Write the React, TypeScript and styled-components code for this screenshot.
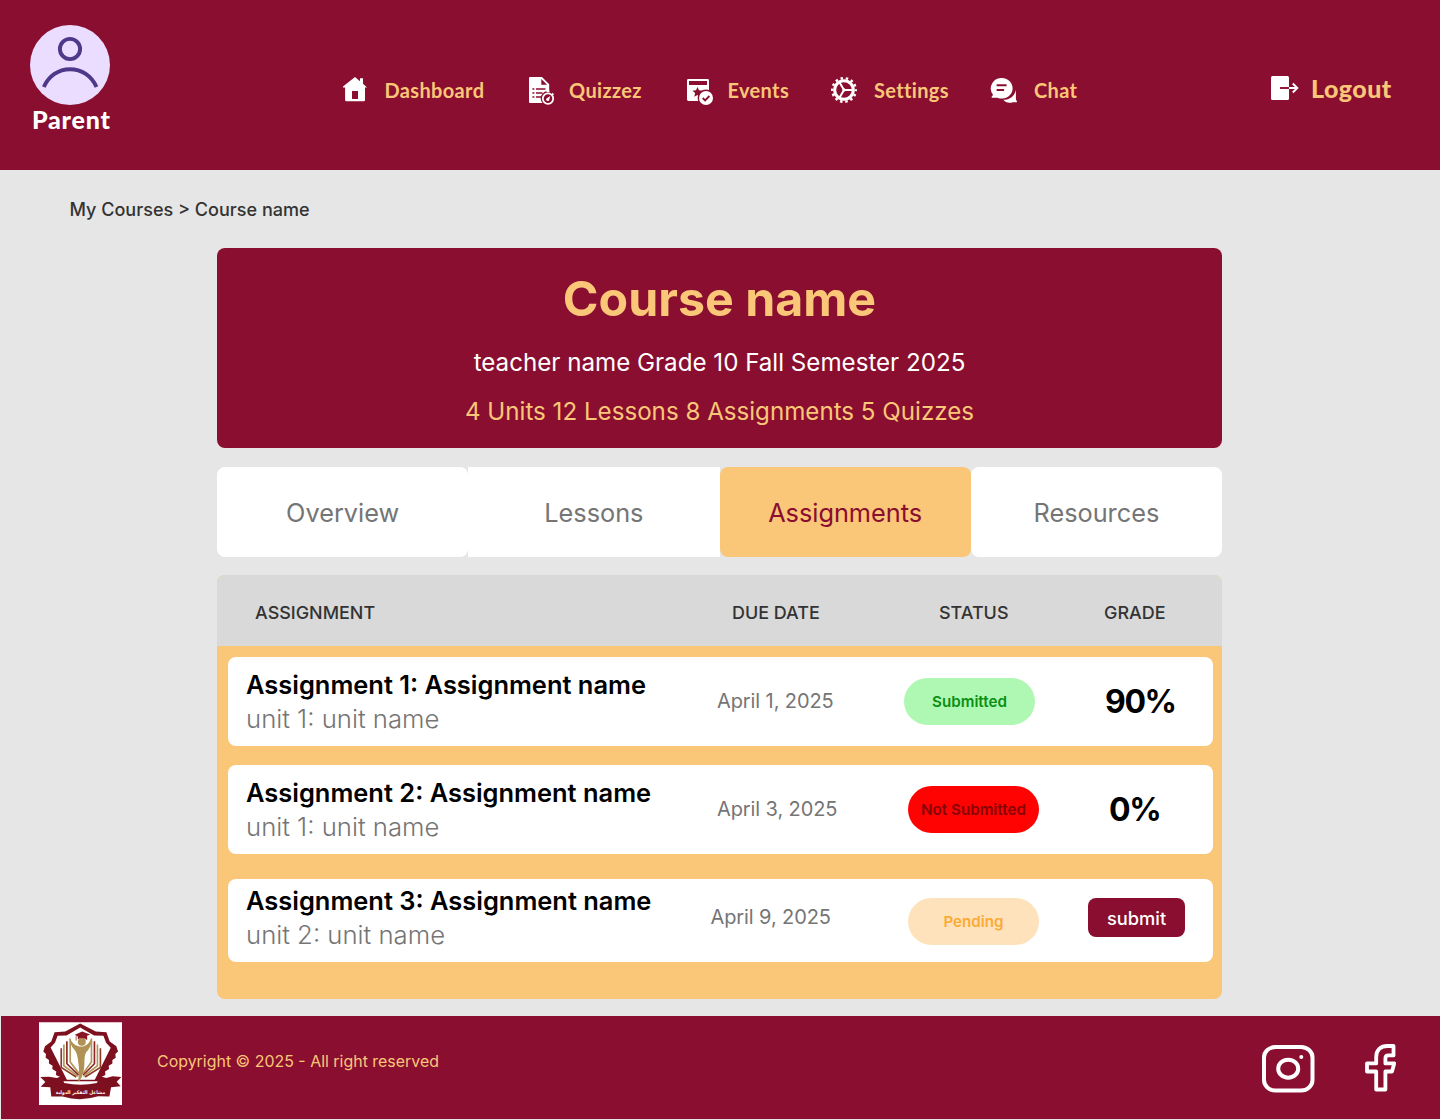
import React from 'react';
import styled, { createGlobalStyle } from 'styled-components';

const maroon = '#890e2f';
const sand = '#fac678';

const GlobalStyle = createGlobalStyle`
  * { box-sizing: border-box; }
  body { margin: 0; background: #e6e6e6; font-family: Inter, "Liberation Sans", sans-serif; }
  h1, p { margin: 0; }
  svg { display: block; }
`;

const Page = styled.div`
  width: 1440px;
  height: 1120px;
  display: flex;
  flex-direction: column;
  background: #e6e6e6;
`;

const Header = styled.header`
  height: 170px;
  flex: none;
  display: flex;
  align-items: flex-start;
  background: ${maroon};
`;

const Profile = styled.div`
  width: 343px;
  padding: 25px 0 0 30px;
`;

const ProfileName = styled.div`
  font: 900 25px/29px Lato, sans-serif;
  letter-spacing: 0.75px;
  padding-left: 2px;
  color: #fff;
`;

const Nav = styled.nav`
  display: flex;
  width: 928px;
  padding-top: 70px;
`;

const NavItem = styled.a<{ $width: number }>`
  width: ${(p) => p.$width}px;
  height: 40px;
  display: flex;
  align-items: center;
`;

const NavIcon = styled.span<{ $width: number; $drop: number }>`
  width: ${(p) => p.$width}px;
  padding-top: ${(p) => p.$drop}px;
  flex: none;
`;

const NavText = styled.span`
  font: 700 20px/40px Lato, sans-serif;
  letter-spacing: 0.35px;
  color: ${sand};
`;

const Logout = styled.a`
  display: flex;
  align-items: center;
  height: 40px;
  margin-top: 68px;
  font: 900 25px/40px Lato, sans-serif;
  letter-spacing: 0.45px;
  color: ${sand};
`;

const LogoutIcon = styled.span`
  width: 40px;
`;

const Breadcrumb = styled.div`
  height: 77px;
  flex: none;
  padding: 28px 0 0 69.5px;
  font-size: 18.05px;
  line-height: 24px;
  font-weight: 450;
  color: #333;
`;

const Main = styled.main`
  width: 1005px;
  margin-left: 217px;
  flex: none;
  height: 769px;
`;

const Banner = styled.section`
  height: 200px;
  margin-top: 0.5px;
  border-radius: 8px;
  background: ${maroon};
  display: flex;
  flex-direction: column;
  align-items: center;
`;

const Title = styled.h1`
  margin-top: 21px;
  font-size: 48.3px;
  line-height: 60px;
  font-weight: 700;
  color: ${sand};
`;

const BannerLine = styled.p<{ $color: string; $gap: number }>`
  margin-top: ${(p) => p.$gap}px;
  font-size: 24.15px;
  line-height: 30px;
  color: ${(p) => p.$color};
`;

const Tabs = styled.div`
  display: grid;
  grid-template-columns: repeat(4, 1fr);
  height: 90px;
  margin-top: 19.5px;
`;

const Tab = styled.button<{ $active?: boolean; $square?: boolean }>`
  border: 0;
  padding: 1px 0 0;
  border-radius: ${(p) => (p.$square ? 0 : 8)}px;
  background: ${(p) => (p.$active ? sand : '#fff')};
  color: ${(p) => (p.$active ? maroon : '#757575')};
  font: 400 25.3px/30px Inter, sans-serif;
`;

const Table = styled.section`
  height: 424px;
  margin-top: 18px;
  border-radius: 8px;
  overflow: hidden;
  background: ${sand};
`;

const TableHead = styled.div`
  height: 71px;
  display: grid;
  grid-template-columns: 477px 207px 165px 1fr;
  align-items: center;
  padding: 4px 0 0 38px;
  background: #d9d9d9;
  color: #333;
  font-size: 17.95px;
  font-weight: 450;
`;

const Row = styled.article<{ $height: number; $gap: number; $cols: string; $top: number }>`
  display: grid;
  grid-template-columns: ${(p) => p.$cols};
  align-items: start;
  width: 985px;
  height: ${(p) => p.$height}px;
  margin: ${(p) => p.$gap}px 0 0 11px;
  padding: ${(p) => p.$top}px 0 0 18px;
  border-radius: 8px;
  background: #fff;
`;

const Name = styled.div`
  font-size: 25.45px;
  line-height: 34px;
  font-weight: 600;
  color: #000;
`;

const Unit = styled.div`
  font-size: 25.7px;
  line-height: 34px;
  font-weight: 300;
  color: #757575;
`;

const DueDate = styled.div`
  padding-top: 16px;
  font-size: 20px;
  letter-spacing: -0.1px;
  line-height: 34px;
  color: #757575;
`;

const pillTone = {
  Submitted: ['#aff8b4', '#0a8f12'],
  'Not Submitted': ['#ff0303', '#860404'],
  Pending: ['#fde2bc', '#fbab34'],
};
type Status = keyof typeof pillTone;

const Pill = styled.div<{ $status: Status; $offset: number }>`
  width: 131px;
  height: 47px;
  margin-top: ${(p) => p.$offset}px;
  border-radius: 24px;
  display: grid;
  place-items: center;
  background: ${(p) => pillTone[p.$status][0]};
  color: ${(p) => pillTone[p.$status][1]};
  font-size: 15.2px;
  font-weight: 600;
`;

const Grade = styled.div`
  padding-top: 13px;
  font-size: 32px;
  letter-spacing: -1.4px;
  line-height: 42px;
  font-weight: 700;
  color: #000;
`;

const Submit = styled.button`
  width: 97px;
  height: 39px;
  margin-top: 14px;
  padding: 1px 0 0;
  border: 0;
  border-radius: 8px;
  background: ${maroon};
  color: #fff;
  font: 450 18.3px/24px Inter, sans-serif;
`;

const Footer = styled.footer`
  height: 103px;
  margin-left: 1px;
  flex: none;
  display: flex;
  background: ${maroon};
`;

const FooterLogo = styled.div`
  width: 156px;
  padding: 5.5px 0 0 37.5px;
`;

const Copyright = styled.p`
  width: 1105px;
  padding-top: 34px;
  font-size: 15.95px;
  line-height: 24px;
  color: ${sand};
`;

const Social = styled.div`
  display: flex;
  gap: 48px;
  padding-top: 27px;
`;

const Avatar = () => (
  <svg width="80" height="80" viewBox="0 0 80 80" fill="none" stroke="#4f378a" strokeWidth="3.9">
    <circle cx="40" cy="40" r="40" fill="#eaddff" stroke="none" />
    <circle cx="40" cy="24" r="10.1" />
    <path d="M13.8 62C18.8 51 28.4 44.2 40 44.2S61.500 51 66.500 62" />
  </svg>
);

const HomeIcon = () => (
  <svg width="24" height="26" viewBox="0 0 24 26" fill="#fff">
    <path d="M12 0 17 4.200V1.200h3v5.600l4 3.600h-2V23a1.200 1.200 0 0 1-1.200 1.200H3.300A1.200 1.200 0 0 1 2.100 23V10.400H0V9.600Z" />
    <path d="M9 14h6v8H9z" fill={maroon} />
  </svg>
);

const QuizIcon = () => (
  <svg width="27" height="30" viewBox="0 0 27 30" fill="none">
    <path d="M1.200 1H13l7.200 7.200V27H1.200A1.200 1.200 0 0 1 0 25.800V2.200A1.200 1.200 0 0 1 1.200 1Z" fill="#fff" />
    <path d="M12.300 3v5.800h5.800" fill={maroon} />
    <path d="M3.400 13h2M7 13h9.500M3.400 17h2M7 17h6.500M3.400 21h2M7 21h5" stroke={maroon} strokeWidth="1.600" />
    <circle cx="19" cy="22.400" r="7.300" fill={maroon} />
    <circle cx="19" cy="22.600" r="5.200" stroke="#fff" strokeWidth="1.800" />
    <path d="M17.500 15.600h3M23.200 17.400l1.300 1.300" stroke="#fff" strokeWidth="1.500" />
    <path d="m21.200 19.900-1 4a1.600 1.600 0 1 1-2-2Z" fill="#fff" />
  </svg>
);

const EventIcon = () => (
  <svg width="27" height="28" viewBox="0 0 27 28" fill="none">
    <rect y="1" width="22" height="22" rx="1.400" fill="#fff" />
    <path d="M2 3h18v4H2z" fill={maroon} />
    <path d="m10.500 9 1.500 3.300 3.600.4-2.700 2.400.8 3.600-3.200-1.800-3.200 1.800.8-3.600-2.700-2.400 3.600-.4Z" fill={maroon} />
    <circle cx="19" cy="20" r="8.400" fill={maroon} />
    <circle cx="19" cy="20" r="7" fill="#fff" />
    <path d="m15.700 20 2.400 2.400 4.300-4.400" stroke={maroon} strokeWidth="1.800" />
  </svg>
);

const GearIcon = () => (
  <svg width="26" height="26" viewBox="0 0 26 26" fill="none" stroke="#fff">
    <circle cx="13" cy="13" r="11.800" strokeWidth="2.400" strokeDasharray="2.500 2.796" strokeDashoffset="1.250" />
    <circle cx="13" cy="13" r="9.300" strokeWidth="3" />
    <path d="M13 13h8.500M13 13 8.600 5.400M13 13l-4.400 7.600" strokeWidth="2" />
    <circle cx="13" cy="13" r="1.200" fill="#fff" />
  </svg>
);

const ChatIcon = () => (
  <svg width="27" height="26" viewBox="-0.600 0 27 26" fill="none">
    <path d="M25.300 11.700v7.300c0 2.200.3 3.500 1 4.300v.9h-4c-4.200 1.200-7.500.2-9.600-2.400 6.500-.1 11.500-3.700 12.600-10.100Z" fill="#fff" />
    <path d="M11.200 0a10.800 10.300 0 1 1-4.400 19.700H1v-1c.8-.5 1.200-1.400 1.300-2.300A10.600 10.300 0 0 1 11.200 0Z" fill="#fff" />
    <path d="M6 7.300h10M6 12h7.500" stroke={maroon} strokeWidth="1.900" />
  </svg>
);

const LogoutGlyph = () => (
  <svg width="28" height="24" viewBox="0 0 28 24" fill="none">
    <rect width="18" height="24" rx="1.500" fill="#fff" />
    <path d="M9 12h9" stroke={maroon} strokeWidth="1.900" />
    <path d="M18 12h8M21.800 7.500l4.500 4.500-4.500 4.500" stroke="#fff" strokeWidth="1.900" />
  </svg>
);

const Crest = () => (
  <svg width="83" height="83.500" viewBox="26 20 250 250" fill="none">
    <path d="M26 20h250v250H26z" fill="#fff" />
    <path
      d="M150 24 105 48 73 50 63 78 44 92 39 108 47 116 46 127 56 134 56 144 67 151 66 161 78 168 77 179 92 186 92 198 211 198 212 186 226 179 225 168 237 161 236 151 247 144 247 134 257 127 256 116 264 108 259 92 239 78 229 50 197 48Z"
      fill="#7d101e"
    />
    <path d="M150 36 109 60 82 61 74 82 61 96 110 193 194 193 242 97 228 82 220 61 192 60Z" fill="#fff" />
    <g strokeWidth="5">
      <path d="M120 70v70l26 34M184 70v70l-25 34" stroke="#b39658" />
      <path d="M110 77v68l35 34M193 77v68l-34 34" stroke="#8d2526" />
      <path d="M101 87v64l43 32M202 87v64l-42 32" stroke="#b39658" />
      <path d="M93 98v58l45 29M211 98v58l-46 29" stroke="#8d3824" />
    </g>
    <path
      d="M117 65c8 18 18 25 31 28l10 0c13-4 21-12 27-28-1 22-6 35-16 44-9 13-4 34-8 54-3 18-8 30-18 38 5-24 4-45 1-63-3-20-4-25-11-35-9-9-14-21-16-38Z"
      fill="#b09254"
    />
    <circle cx="155" cy="79" r="12" fill="#b09254" />
    <path d="m134 58 22-10 24 9-9 4v13c-8-8-20-8-28-3V63Z" fill="#8b1623" />
    <path d="M138 60v15" stroke="#8b1623" strokeWidth="2" />
    <path
      d="M30 185 56 184 80 188 93 183 102 203Q151 213 200 203L211 183 228 188 248 183 274 185 260 199 272 213 243 216 238 244 204 243Q151 260 97 244L63 244 60 216 31 214 45 200Z"
      fill="#7d101e"
    />
    <text x="151" y="236" textAnchor="middle" fill="#fff" fontFamily="DejaVu Sans Condensed, DejaVu Sans, sans-serif" fontWeight="700" fontSize="15">مشاعل التفكير الدولية</text>
  </svg>
);

const Instagram = () => (
  <svg width="53" height="52" viewBox="0 0 53 52" fill="none" stroke="#fff" strokeWidth="4">
    <rect x="2" y="4" width="48.500" height="43.600" rx="11.500" ry="10.500" />
    <ellipse cx="26.200" cy="25.700" rx="10" ry="9" />
    <circle cx="39.300" cy="14" r="2" fill="#fff" stroke="none" />
  </svg>
);

const Facebook = () => (
  <svg width="34" height="52" viewBox="0 0 34 52" fill="none" stroke="#fff" strokeWidth="3.800" strokeLinejoin="round">
    <path d="M30.500 3h-6c-7 0-11.300 4-11.300 11v6.400H4v8.100h9.200v18h9.200v-18h6.600l2.200-8.100h-8.800v-5c0-2 1-3 3-3h5.100Z" />
  </svg>
);

const navItems = [
  { text: 'Dashboard', icon: <HomeIcon />, width: 186, iconWidth: 41.5, drop: 0 },
  { text: 'Quizzez', icon: <QuizIcon />, width: 158, iconWidth: 40, drop: 1 },
  { text: 'Events', icon: <EventIcon />, width: 144, iconWidth: 40.5, drop: 3 },
  { text: 'Settings', icon: <GearIcon />, width: 159, iconWidth: 43, drop: 0 },
  { text: 'Chat', icon: <ChatIcon />, width: 120, iconWidth: 44, drop: 1 },
];

const rows: {
  name: string; unit: string; date: string; status: Status; grade?: string;
  height: number; gap: number; top: number; cols: string; pill: number;
}[] = [
  { name: 'Assignment 1: Assignment name', unit: 'unit 1: unit name', date: 'April 1, 2025', status: 'Submitted', grade: '90%', height: 89, gap: 11, top: 11, cols: '471px 187px 201px 1fr', pill: 10 },
  { name: 'Assignment 2: Assignment name', unit: 'unit 1: unit name', date: 'April 3, 2025', status: 'Not Submitted', grade: '0%', height: 89, gap: 19, top: 11, cols: '471px 191px 201px 1fr', pill: 10 },
  { name: 'Assignment 3: Assignment name', unit: 'unit 2: unit name', date: 'April 9, 2025', status: 'Pending', height: 83, gap: 25, top: 5, cols: '464.5px 197.5px 180px 1fr', pill: 14 },
];

export default function App() {
  return (
    <Page>
      <GlobalStyle />
      <Header>
        <Profile>
          <Avatar />
          <ProfileName>Parent</ProfileName>
        </Profile>
        <Nav>
          {navItems.map((item) => (
            <NavItem key={item.text} $width={item.width}>
              <NavIcon $width={item.iconWidth} $drop={item.drop}>{item.icon}</NavIcon>
              <NavText>{item.text}</NavText>
            </NavItem>
          ))}
        </Nav>
        <Logout>
          <LogoutIcon><LogoutGlyph /></LogoutIcon>
          Logout
        </Logout>
      </Header>
      <Breadcrumb>My Courses &gt; Course name</Breadcrumb>
      <Main>
        <Banner>
          <Title>Course name</Title>
          <BannerLine $color="#fff" $gap={19}>teacher name Grade 10 Fall Semester 2025</BannerLine>
          <BannerLine $color={sand} $gap={19}>4 Units 12 Lessons 8 Assignments 5 Quizzes</BannerLine>
        </Banner>
        <Tabs>
          <Tab>Overview</Tab>
          <Tab $square>Lessons</Tab>
          <Tab $active>Assignments</Tab>
          <Tab>Resources</Tab>
        </Tabs>
        <Table>
          <TableHead>
            <span>ASSIGNMENT</span>
            <span>DUE DATE</span>
            <span>STATUS</span>
            <span>GRADE</span>
          </TableHead>
          {rows.map((r) => (
            <Row key={r.name} $height={r.height} $gap={r.gap} $top={r.top} $cols={r.cols}>
              <div>
                <Name>{r.name}</Name>
                <Unit>{r.unit}</Unit>
              </div>
              <DueDate>{r.date}</DueDate>
              <Pill $status={r.status} $offset={r.pill}>{r.status}</Pill>
              {r.grade ? <Grade>{r.grade}</Grade> : <Submit>submit</Submit>}
            </Row>
          ))}
        </Table>
      </Main>
      <Footer>
        <FooterLogo><Crest /></FooterLogo>
        <Copyright>Copyright © 2025 - All right reserved</Copyright>
        <Social>
          <Instagram />
          <Facebook />
        </Social>
      </Footer>
    </Page>
  );
}
